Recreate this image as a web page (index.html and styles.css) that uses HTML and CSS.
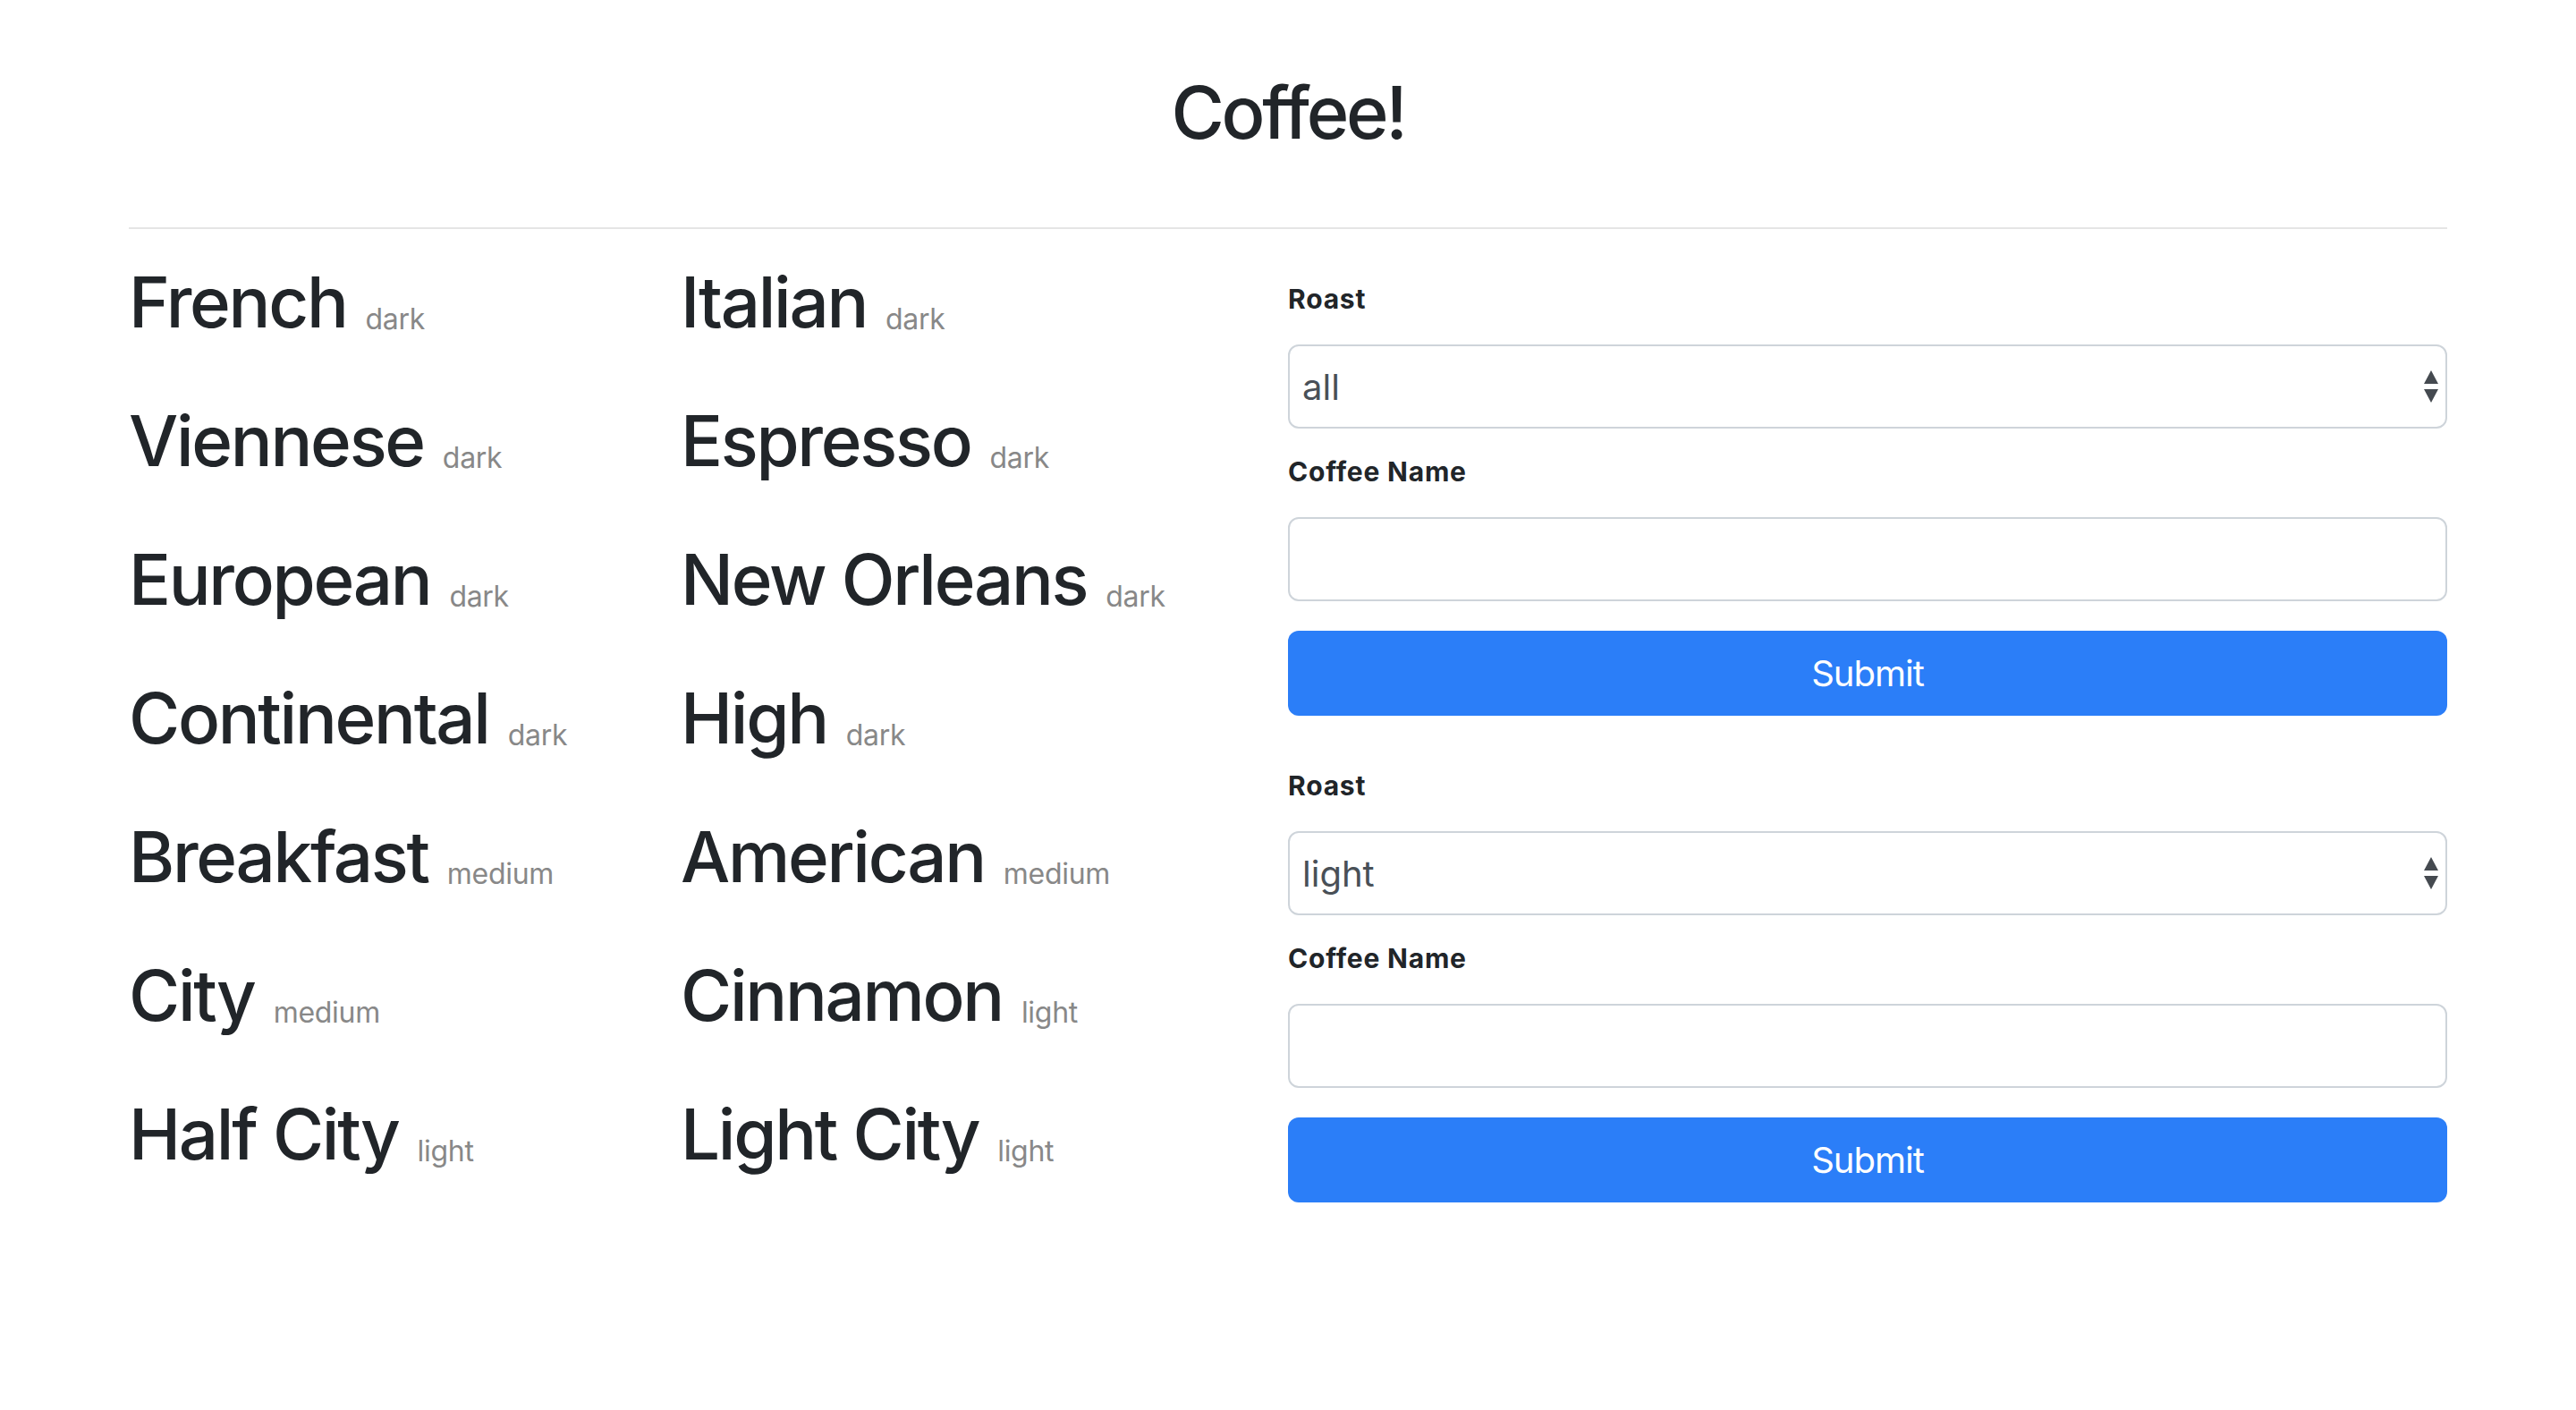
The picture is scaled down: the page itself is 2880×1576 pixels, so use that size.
FILE: index.html
```html
<!DOCTYPE html>
<html lang="en">
<head>
<meta charset="utf-8">
<title>Coffee!</title>
<link rel="stylesheet" href="styles.css">
</head>
<body>
<div class="container">
  <h1 class="title">Coffee!</h1>
  <hr class="rule">
  <div class="main">
    <div class="coffees">
      <div class="coffee"><span class="name">French</span><span class="roast">dark</span></div>
      <div class="coffee"><span class="name">Italian</span><span class="roast">dark</span></div>
      <div class="coffee"><span class="name">Viennese</span><span class="roast">dark</span></div>
      <div class="coffee"><span class="name">Espresso</span><span class="roast">dark</span></div>
      <div class="coffee"><span class="name">European</span><span class="roast">dark</span></div>
      <div class="coffee"><span class="name">New Orleans</span><span class="roast">dark</span></div>
      <div class="coffee"><span class="name">Continental</span><span class="roast">dark</span></div>
      <div class="coffee"><span class="name">High</span><span class="roast">dark</span></div>
      <div class="coffee"><span class="name">Breakfast</span><span class="roast">medium</span></div>
      <div class="coffee"><span class="name">American</span><span class="roast">medium</span></div>
      <div class="coffee"><span class="name">City</span><span class="roast">medium</span></div>
      <div class="coffee"><span class="name">Cinnamon</span><span class="roast">light</span></div>
      <div class="coffee"><span class="name">Half City</span><span class="roast">light</span></div>
      <div class="coffee"><span class="name">Light City</span><span class="roast">light</span></div>
    </div>
    <div class="forms">
      <form class="form">
        <label class="label" for="roast1">Roast</label>
        <div class="select-wrap">
          <select id="roast1" class="control select">
            <option>all</option>
            <option>light</option>
            <option>medium</option>
            <option>dark</option>
          </select>
          <svg class="arrows" width="16" height="36" viewBox="0 0 16 36"><path d="M8 0 L16 15 L0 15 Z" fill="#454a50"/><path d="M0 21 L16 21 L8 36 Z" fill="#454a50"/></svg>
        </div>
        <label class="label" for="name1">Coffee Name</label>
        <input id="name1" class="control input" type="text">
        <button class="submit" type="button">Submit</button>
      </form>
      <form class="form">
        <label class="label" for="roast2">Roast</label>
        <div class="select-wrap">
          <select id="roast2" class="control select">
            <option>light</option>
            <option>medium</option>
            <option>dark</option>
          </select>
          <svg class="arrows" width="16" height="36" viewBox="0 0 16 36"><path d="M8 0 L16 15 L0 15 Z" fill="#454a50"/><path d="M0 21 L16 21 L8 36 Z" fill="#454a50"/></svg>
        </div>
        <label class="label" for="name2">Coffee Name</label>
        <input id="name2" class="control input" type="text">
        <button class="submit" type="button">Submit</button>
      </form>
    </div>
  </div>
</div>
</body>
</html>
```

FILE: styles.css
```css
* {
  box-sizing: border-box;
}

html, body {
  margin: 0;
  padding: 0;
  background: #ffffff;
}

body {
  font-family: "Inter", "Noto Sans", "Liberation Sans", sans-serif;
  color: #212529;
}

.container {
  padding: 0 144px;
}

.title {
  margin: 0;
  padding-top: 78px;
  font-size: 81px;
  line-height: 97px;
  font-weight: 500;
  text-align: center;
  letter-spacing: -3.3px;
}

.rule {
  margin: 79px 0 0 0;
  border: 0;
  border-top: 2px solid rgba(0, 0, 0, 0.1);
  height: 0;
}

.main {
  display: flex;
}

.coffees {
  width: 1296px;
  flex: none;
  display: grid;
  grid-template-columns: 617px 1fr;
  margin-top: 4px;
  align-content: start;
}

.coffee {
  line-height: 155px;
  height: 155px;
  white-space: nowrap;
}

.name {
  font-size: 78px;
  font-weight: 500;
  letter-spacing: -2.3px;
}

.roast {
  display: inline-block;
  font-size: 32px;
  color: #888888;
  margin-left: 21px;
  letter-spacing: -0.3px;
  position: relative;
  top: 2px;
}

.forms {
  flex: 1;
  padding-top: 60px;
}

.form {
  display: flex;
  flex-direction: column;
  margin-bottom: 60px;
}

.label {
  display: block;
  font-size: 30px;
  line-height: 36px;
  font-weight: 700;
  letter-spacing: 0.8px;
  margin-bottom: 33px;
}

.select-wrap {
  position: relative;
  margin-bottom: 30px;
}

.control {
  display: block;
  width: 100%;
  height: 94px;
  border: 2px solid #ced4da;
  border-radius: 12px;
  background: #ffffff;
  font-family: "Inter", "Noto Sans", "Liberation Sans", sans-serif;
  font-size: 40px;
  color: #495057;
  padding: 0 14px;
  outline: none;
}

.select {
  appearance: none;
  -webkit-appearance: none;
}

.arrows {
  position: absolute;
  right: 10px;
  top: 29px;
  pointer-events: none;
}

.submit {
  display: block;
  width: 100%;
  height: 95px;
  margin-top: 33px;
  border: 0;
  border-radius: 12px;
  background: #2b7ef8;
  color: #ffffff;
  font-family: "Inter", "Noto Sans", "Liberation Sans", sans-serif;
  font-size: 40px;
  font-weight: 400;
  letter-spacing: -1px;
  cursor: pointer;
}
```
